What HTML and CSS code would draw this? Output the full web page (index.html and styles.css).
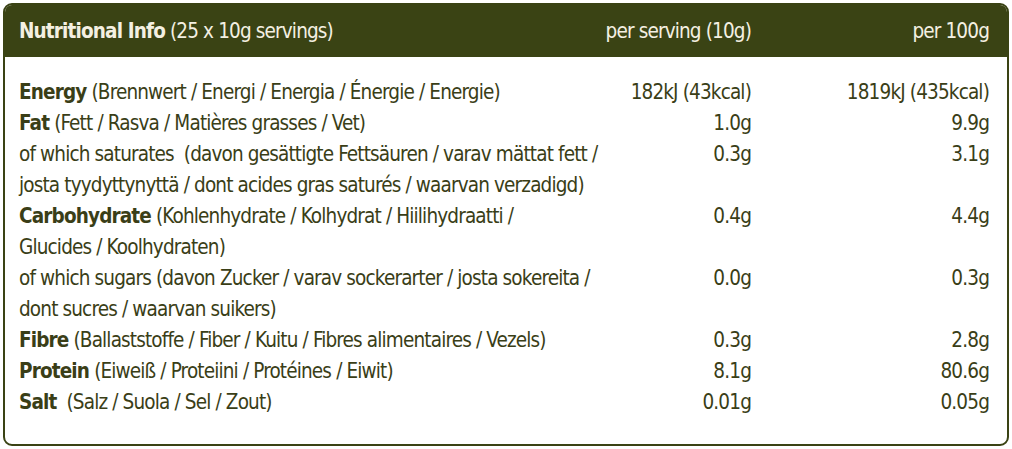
FILE: index.html
```html
<!DOCTYPE html>
<html lang="en">
<head>
<meta charset="utf-8">
<title>Nutritional Info</title>
<link rel="stylesheet" href="styles.css">
</head>
<body>
<div class="panel">
  <div class="head">
    <div class="h-label"><b>Nutritional Info</b> (25 x 10g servings)</div>
    <div class="h-col">per serving (10g)</div>
    <div class="h-col">per 100g</div>
  </div>
  <div class="rows">
    <div class="lbl"><b>Energy</b> (Brennwert / Energi / Energia / Énergie / Energie)</div>
    <div class="val">182kJ (43kcal)</div>
    <div class="val">1819kJ (435kcal)</div>

    <div class="lbl"><b>Fat</b> (Fett / Rasva / Matières grasses / Vet)</div>
    <div class="val">1.0g</div>
    <div class="val">9.9g</div>

    <div class="lbl">of which saturates &nbsp;(davon gesättigte Fettsäuren / varav mättat fett /<br>josta tyydyttynyttä / dont acides gras saturés / waarvan verzadigd)</div>
    <div class="val">0.3g</div>
    <div class="val">3.1g</div>

    <div class="lbl"><b>Carbohydrate</b> (Kohlenhydrate / Kolhydrat / Hiilihydraatti /<br>Glucides / Koolhydraten)</div>
    <div class="val">0.4g</div>
    <div class="val">4.4g</div>

    <div class="lbl">of which sugars (davon Zucker / varav sockerarter / josta sokereita /<br>dont sucres / waarvan suikers)</div>
    <div class="val">0.0g</div>
    <div class="val">0.3g</div>

    <div class="lbl"><b>Fibre</b> (Ballaststoffe / Fiber / Kuitu / Fibres alimentaires / Vezels)</div>
    <div class="val">0.3g</div>
    <div class="val">2.8g</div>

    <div class="lbl"><b>Protein</b> (Eiweiß / Proteiini / Protéines / Eiwit)</div>
    <div class="val">8.1g</div>
    <div class="val">80.6g</div>

    <div class="lbl"><b>Salt</b> &nbsp;(Salz / Suola / Sel / Zout)</div>
    <div class="val">0.01g</div>
    <div class="val">0.05g</div>
  </div>
</div>
</body>
</html>
```

FILE: styles.css
```css
html, body {
  margin: 0;
  padding: 0;
  background: #ffffff;
}
body {
  padding: 3px;
  font-family: "DejaVu Sans Condensed", "DejaVu Sans", sans-serif;
  font-stretch: condensed;
  letter-spacing: -0.85px;
  color: #3a3e17;
}
.panel {
  border: 2px solid #3a4314;
  border-radius: 9px;
  overflow: hidden;
  height: 439px;
  box-sizing: content-box;
}
.head {
  background: #3a4314;
  color: #f4f0e2;
  height: 52px;
  display: grid;
  grid-template-columns: minmax(0, 1fr) 170px 238px;
  align-items: center;
  padding: 0 18px 0 14px;
  font-size: 20.5px;
}
.head b {
  font-weight: 700;
}
.h-col {
  text-align: right;
}
.rows {
  display: grid;
  grid-template-columns: minmax(0, 1fr) 170px 238px;
  padding: 20px 18px 0 14px;
  font-size: 20.5px;
  line-height: 31px;
}
.lbl {
  white-space: nowrap;
}
.lbl b {
  font-weight: 700;
}
.val {
  text-align: right;
}
```
